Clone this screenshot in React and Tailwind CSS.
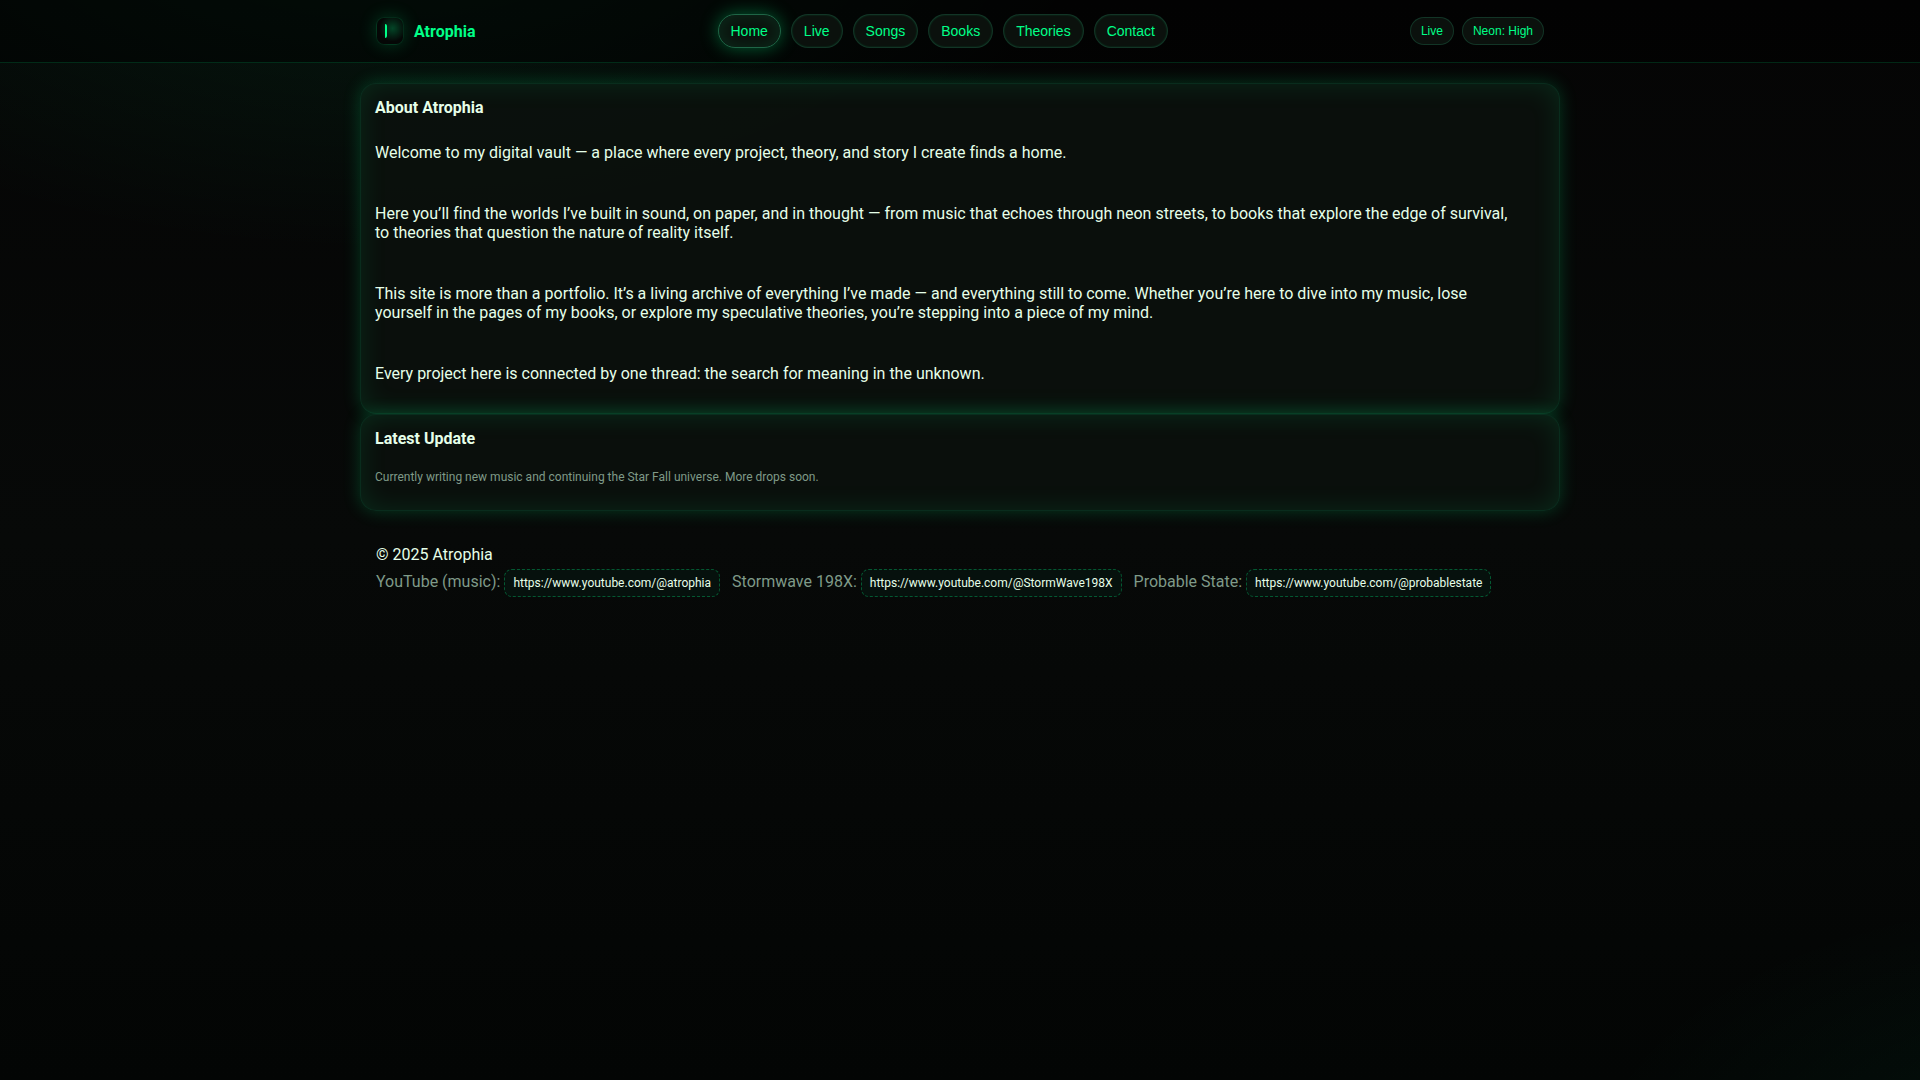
const navItems = ['Home', 'Live', 'Songs', 'Books', 'Theories', 'Contact'];

const paragraphs = [
  'Welcome to my digital vault — a place where every project, theory, and story I create finds a home.',
  'Here you’ll find the worlds I’ve built in sound, on paper, and in thought — from music that echoes through neon streets, to books that explore the edge of survival, to theories that question the nature of reality itself.',
  'This site is more than a portfolio. It’s a living archive of everything I’ve made — and everything still to come. Whether you’re here to dive into my music, lose yourself in the pages of my books, or explore my speculative theories, you’re stepping into a piece of my mind.',
  'Every project here is connected by one thread: the search for meaning in the unknown.',
];

const channels = [
  { label: 'YouTube (music):', url: 'https://www.youtube.com/@atrophia' },
  { label: 'Stormwave 198X:', url: 'https://www.youtube.com/@StormWave198X' },
  { label: 'Probable State:', url: 'https://www.youtube.com/@probablestate' },
];

function Logo() {
  return (
    <span className="flex h-7 w-7 items-center rounded-lg border border-[#00ff88]/15 bg-[radial-gradient(circle_at_60%_40%,rgba(0,255,136,0.25),transparent_60%),linear-gradient(#050706,#050706)] pl-2 shadow-[0_0_18px_rgba(0,255,136,0.2)]">
      <span className="h-3.5 w-0.5 rounded-r-sm bg-[#00ff88]" />
    </span>
  );
}

function NavButton({ label, active }) {
  return (
    <button
      type="button"
      className={`rounded-full border px-3 py-2 font-['Liberation_Sans',sans-serif] text-sm leading-4 text-[#00ff88] ${
        active
          ? 'border-[#1f6546] bg-[#0b110d] shadow-[0_0_18px_rgba(0,255,136,0.35),inset_0_0_18px_rgba(0,255,136,0.12)]'
          : 'border-[#1a5a40]/50 bg-[#0b110d] shadow-[inset_0_0_2px_rgba(0,255,136,0.2)]'
      }`}
    >
      {label}
    </button>
  );
}

function StatusPill({ children }) {
  return (
    <button
      type="button"
      className="rounded-full border border-[#1a5a40]/50 bg-[#0b110d] px-2.5 py-1.5 font-['Liberation_Sans',sans-serif] text-xs leading-3.5 text-[#00ff88]"
    >
      {children}
    </button>
  );
}

function Card({ title, children }) {
  return (
    <section className="rounded-2xl border border-[#00ff99]/12 bg-[#0b110d]/90 p-3.5 shadow-[0_0_18px_rgba(0,255,136,0.2),inset_0_0_28px_rgba(0,255,136,0.11)]">
      <h2 className="font-bold">{title}</h2>
      {children}
    </section>
  );
}

export default function App() {
  return (
    <div className="min-h-screen bg-[radial-gradient(1200px_600px_at_20%_-10%,rgba(0,255,136,0.09),transparent_60%),radial-gradient(900px_500px_at_110%_110%,rgba(0,255,170,0.06),transparent_60%),linear-gradient(180deg,#050505,#070908_50%,#030504)] font-[Roboto,sans-serif] text-base leading-[19px] text-[#e6ffe9] [font-variant-ligatures:none]">
      <header className="border-b border-[#00ff88]/15 bg-black/50">
        <div className="mx-auto flex max-w-[1200px] items-center justify-between px-4 py-3.5">
          <a href="#home" className="flex items-center gap-2.5 font-bold text-[#00ff88]">
            <Logo />
            Atrophia
          </a>
          <nav className="flex gap-2.5">
            {navItems.map((item, i) => (
              <NavButton key={item} label={item} active={i === 0} />
            ))}
          </nav>
          <div className="flex gap-2">
            <StatusPill>Live</StatusPill>
            <StatusPill>Neon: High</StatusPill>
          </div>
        </div>
      </header>

      <main className="mx-auto max-w-[1200px] pt-5">
        <Card title="About Atrophia">
          <div className="flex flex-col gap-[42px] pt-[26px] pr-6 pb-4">
            {paragraphs.map((text) => (
              <p key={text}>{text}</p>
            ))}
          </div>
        </Card>
        <Card title="Latest Update">
          <p className="pt-[22px] pb-3 text-xs leading-3.5 text-[#7f9a88]">
            Currently writing new music and continuing the Star Fall universe. More drops soon.
          </p>
        </Card>
      </main>

      <footer className="mx-auto flex max-w-[1200px] flex-col gap-[5px] px-4 py-[34px]">
        <div>© 2025 Atrophia</div>
        <div className="flex flex-wrap gap-3 text-[#7f9a88]">
          {channels.map(({ label, url }) => (
            <div key={url} className="flex items-baseline gap-1">
              <span>{label}</span>
              <a
                href={url}
                className="rounded-lg border border-dashed border-[#00ff88]/30 bg-[#06110d] px-2 py-1.5 text-xs leading-3.5 text-[#e6ffe9]"
              >
                {url}
              </a>
            </div>
          ))}
        </div>
      </footer>
    </div>
  );
}
